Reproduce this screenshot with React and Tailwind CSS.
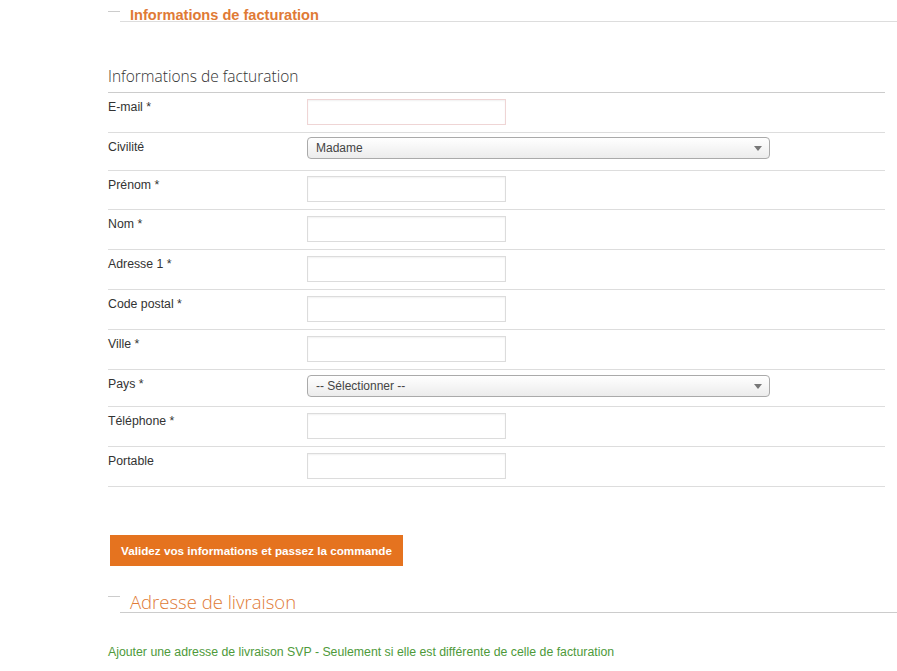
const rows = [
  { label: 'E-mail *', type: 'input', h: 'h-[40px]', error: true },
  { label: 'Civilité', type: 'select', h: 'h-[38px]', value: 'Madame' },
  { label: 'Prénom *', type: 'input', h: 'h-[39px]', pt: 'pt-[5px]' },
  { label: 'Nom *', type: 'input', h: 'h-[40px]' },
  { label: 'Adresse 1 *', type: 'input', h: 'h-[40px]' },
  { label: 'Code postal *', type: 'input', h: 'h-[40px]' },
  { label: 'Ville *', type: 'input', h: 'h-[40px]' },
  { label: 'Pays *', type: 'select', h: 'h-[37px]', value: '-- Sélectionner --', pt: 'pt-[5px]' },
  { label: 'Téléphone *', type: 'input', h: 'h-[40px]' },
  { label: 'Portable', type: 'input', h: 'h-[40px]' },
];

const App = () => {
  return (
    <div className="w-[897px] h-[671px] bg-white overflow-hidden font-['Liberation_Sans',Arial,sans-serif] text-[#333]">
      {/* Section heading */}
      <div className="flex items-start ml-[108px]">
        <span className="w-[12px] h-px bg-[#ccc] mt-[11px]"></span>
        <div className="flex-1 border-b border-[#ddd] h-[22px] pl-[10px] pt-[3px]">
          <span className="text-[14.6px] leading-[18px] font-bold text-[#e07a35]">Informations de facturation</span>
        </div>
      </div>

      <div className="ml-[108px] w-[777px]">
        <div className="mt-[44px] pb-[6px] leading-[20px] text-[15.5px] font-light font-['Open_Sans',sans-serif] text-[#333] border-b border-[#ccc]">
          Informations de facturation
        </div>

        {rows.map((r) => (
          <div key={r.label} className={`flex items-start border-b border-[#ddd] ${r.h}`}>
            <div className="w-[199px] pt-[6px] text-[12.3px] leading-[16px] text-[#333]">{r.label}</div>
            {r.type === 'input' ? (
              <div className={r.pt || 'pt-[6px]'}>
                <input
                  type="text"
                  className={`block w-[199px] h-[26px] bg-white border shadow-[inset_0_1px_2px_rgba(0,0,0,0.06)] outline-none ${
                    r.error ? 'border-[#efd5d5] shadow-[0_0_2px_rgba(220,120,120,0.35)]' : 'border-[#dcdcdc]'
                  }`}
                />
              </div>
            ) : (
              <div className={r.pt || 'pt-[4px]'}>
                <div className="relative w-[463px] h-[22px] rounded-[4px] border border-[#aaa] bg-gradient-to-b from-white to-[#ececec] flex items-center pl-[8px] text-[12px] text-[#444]">
                  {r.value}
                  <span className="absolute right-[7px] top-[8px] w-0 h-0 border-l-[4px] border-r-[4px] border-t-[5px] border-l-transparent border-r-transparent border-t-[#777]"></span>
                </div>
              </div>
            )}
          </div>
        ))}
      </div>

      <div className="ml-[110px] mt-[48px]">
        <button className="w-[293px] h-[31px] bg-[#e5731f] text-white text-[11.7px] font-bold">
          Validez vos informations et passez la commande
        </button>
      </div>

      {/* Delivery heading */}
      <div className="flex items-start ml-[108px] mt-[25px]">
        <span className="w-[12px] h-px bg-[#ccc] mt-[5px]"></span>
        <div className="flex-1 border-b border-[#ccc] h-[22px] pl-[10px]">
          <span className="text-[18.5px] leading-[21px] font-light font-['Open_Sans',sans-serif] text-[#e07a35]">Adresse de livraison</span>
        </div>
      </div>

      <p className="ml-[108px] mt-[32px] text-[12.3px] leading-[14px] text-[#4e9a3a]">
        Ajouter une adresse de livraison SVP - Seulement si elle est différente de celle de facturation
      </p>
    </div>
  );
};

export default App;
